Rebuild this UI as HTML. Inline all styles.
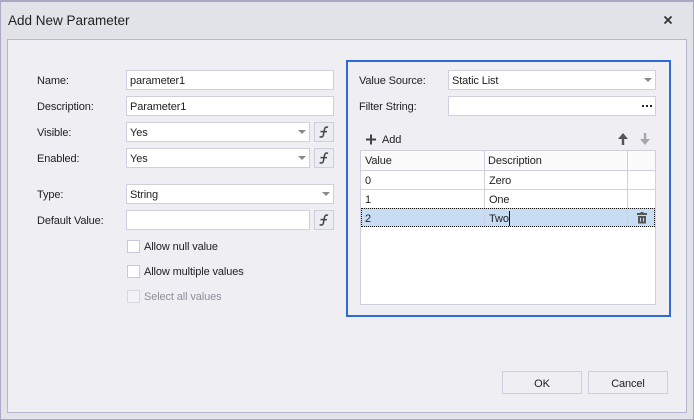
<!DOCTYPE html>
<html><head><meta charset="utf-8"><style>
html,body{margin:0;padding:0;width:694px;height:420px;overflow:hidden;background:#e2e2e9}
*{box-sizing:border-box}
body{font-family:"Liberation Sans",sans-serif;font-size:11px;letter-spacing:-.12px;color:#222;position:relative}
.a{position:absolute}
.t{position:absolute;line-height:14px;white-space:nowrap;margin-top:1px}
.i{position:absolute;background:#fff;border:1px solid #cfcfdd;height:20px;line-height:18px;padding:1px 0 0 3px;white-space:nowrap}
.f{position:absolute;left:314px;width:20px;height:20px;border:1px solid #cfcfdd;background:#ecedf2}
.arr{position:absolute;width:0;height:0;border-left:4px solid transparent;border-right:4px solid transparent;border-top:4px solid #8a8a8a}
.c{position:absolute;left:127px;width:13px;height:13px;border:1px solid #c8c8d8;background:#fff}
.l{position:absolute;background:#cfcfdd}
.b{position:absolute;top:371px;height:23px;width:80px;border:1px solid #cfcfdd;text-align:center;line-height:22px;padding-top:1px;background:#eeeef3}
</style></head><body>
<div class="a" style="left:0;top:0;width:694px;height:420px;border:1px solid #a9a9c6;border-top-width:2px"></div>
<div class="t" style="left:8px;top:12px;font-size:13.5px;letter-spacing:0;line-height:16px;color:#222">Add New Parameter</div>
<svg class="a" style="left:663px;top:15px" width="10" height="10"><path d="M1.5 1.5L8.5 8.5M8.5 1.5L1.5 8.5" stroke="#333" stroke-width="1.8"/></svg>
<div class="a" style="left:7px;top:39px;width:680px;height:374px;background:#eeeef3;border:1px solid #b6b6cf"></div>

<div class="t" style="left:37px;top:73px">Name:</div>
<div class="t" style="left:37px;top:99px">Description:</div>
<div class="t" style="left:37px;top:125px">Visible:</div>
<div class="t" style="left:37px;top:151px">Enabled:</div>
<div class="t" style="left:37px;top:187px">Type:</div>
<div class="t" style="left:37px;top:213px">Default Value:</div>

<div class="i" style="left:126px;top:70px;width:208px">parameter1</div>
<div class="i" style="left:126px;top:96px;width:208px">Parameter1</div>
<div class="i" style="left:126px;top:122px;width:184px">Yes</div><div class="arr" style="left:298px;top:130px"></div>
<div class="i" style="left:126px;top:148px;width:184px">Yes</div><div class="arr" style="left:298px;top:156px"></div>
<div class="i" style="left:126px;top:184px;width:208px">String</div><div class="arr" style="left:322px;top:192px"></div>
<div class="i" style="left:126px;top:210px;width:184px"></div>

<div class="f" style="top:122px"><svg width="18" height="18"><path d="M13 4.4C11 3.4 9.8 4.4 9.3 7L8.5 11.5C8 14 6.8 14.6 4.6 13.6M5.5 8.6H12" fill="none" stroke="#444" stroke-width="1.5"/></svg></div>
<div class="f" style="top:148px"><svg width="18" height="18"><path d="M13 4.4C11 3.4 9.8 4.4 9.3 7L8.5 11.5C8 14 6.8 14.6 4.6 13.6M5.5 8.6H12" fill="none" stroke="#444" stroke-width="1.5"/></svg></div>
<div class="f" style="top:210px"><svg width="18" height="18"><path d="M13 4.4C11 3.4 9.8 4.4 9.3 7L8.5 11.5C8 14 6.8 14.6 4.6 13.6M5.5 8.6H12" fill="none" stroke="#444" stroke-width="1.5"/></svg></div>

<div class="c" style="top:240px"></div><div class="t" style="left:144px;top:239px">Allow null value</div>
<div class="c" style="top:265px"></div><div class="t" style="left:144px;top:264px">Allow multiple values</div>
<div class="c" style="top:290px;background:#f3f3f7;border-color:#d8d8e2"></div><div class="t" style="left:144px;top:289px;color:#8f8f98">Select all values</div>

<div class="a" style="left:346px;top:60px;width:325px;height:257px;border:2px solid #2d6bd6"></div>
<div class="t" style="left:359px;top:73px">Value Source:</div>
<div class="t" style="left:359px;top:99px">Filter String:</div>
<div class="i" style="left:448px;top:70px;width:208px">Static List</div><div class="arr" style="left:644px;top:78px"></div>
<div class="i" style="left:448px;top:96px;width:208px"></div>
<svg class="a" style="left:641px;top:104px" width="12" height="4"><path d="M1 1h2v2H1zM5 1h2v2H5zM9 1h2v2H9z" fill="#222"/></svg>

<svg class="a" style="left:365px;top:134px" width="12" height="12"><path d="M6 0.5V10.5M1 5.5H11" stroke="#444" stroke-width="2"/></svg>
<div class="t" style="left:382px;top:132px">Add</div>
<svg class="a" style="left:618px;top:133px" width="10" height="12"><path d="M5 0L10 6H6.2V12H3.8V6H0Z" fill="#555"/></svg>
<svg class="a" style="left:640px;top:133px" width="10" height="12"><path d="M5 12L10 6H6.2V0H3.8V6H0Z" fill="#a8a8a8"/></svg>

<div class="a" style="left:360px;top:150px;width:296px;height:155px;background:#fff;border:1px solid #cfcfdd"></div>
<div class="a" style="left:361px;top:151px;width:294px;height:19px;background:#fbfbfc"></div>
<div class="a" style="left:361px;top:209px;width:294px;height:18px;background:#c8dcf3"></div>
<div class="l" style="left:361px;top:170px;width:294px;height:1px"></div>
<div class="l" style="left:361px;top:189px;width:294px;height:1px"></div>
<div class="l" style="left:361px;top:208px;width:294px;height:1px"></div>
<div class="l" style="left:484px;top:151px;width:1px;height:76px"></div>
<div class="l" style="left:627px;top:151px;width:1px;height:76px"></div>
<div class="a" style="left:361px;top:208px;width:294px;height:19px;border:1px dotted #111"></div>
<div class="t" style="left:365px;top:153px">Value</div>
<div class="t" style="left:488px;top:153px">Description</div>
<div class="t" style="left:365px;top:173px">0</div>
<div class="t" style="left:489px;top:173px">Zero</div>
<div class="t" style="left:365px;top:192px">1</div>
<div class="t" style="left:489px;top:192px">One</div>
<div class="t" style="left:365px;top:211px">2</div>
<div class="t" style="left:489px;top:211px">Two</div>
<div class="a" style="left:509px;top:211px;width:1px;height:15px;background:#111"></div>
<svg class="a" style="left:636px;top:212px" width="12" height="12"><path d="M4.5 0H7.5V1H11V3H1V1H4.5ZM2 4H10V11.5H2ZM4 6V9.5H5V6ZM7 6V9.5H8V6Z" fill="#555" fill-rule="evenodd"/></svg>

<div class="b" style="left:502px">OK</div>
<div class="b" style="left:588px">Cancel</div>
</body></html>
